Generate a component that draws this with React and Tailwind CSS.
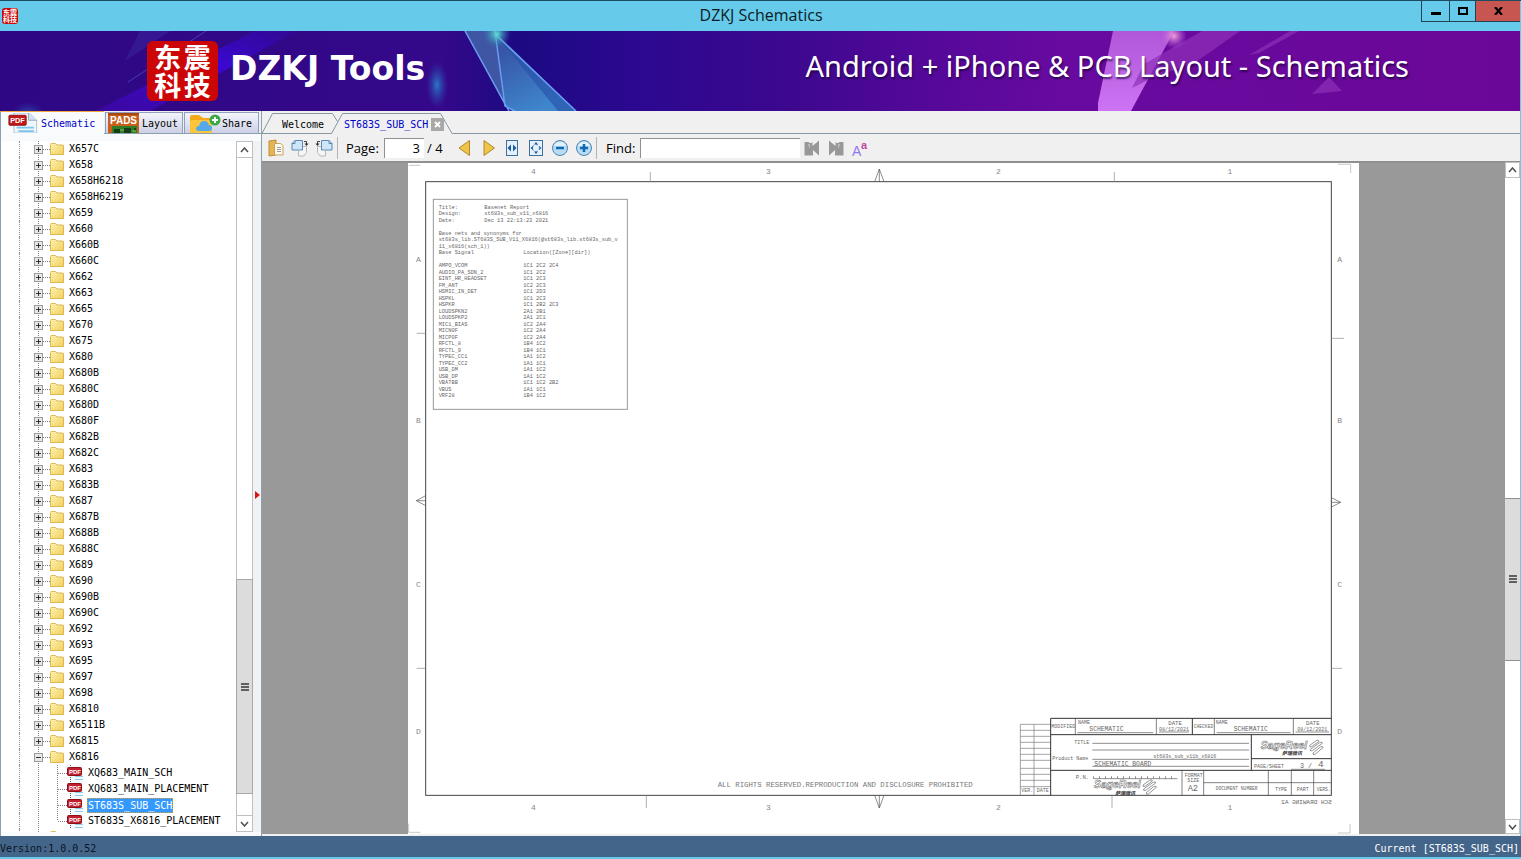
import React from "react";

const FOLDERS = [
  "X657C", "X658", "X658H6218", "X658H6219", "X659", "X660", "X660B", "X660C",
  "X662", "X663", "X665", "X670", "X675", "X680", "X680B", "X680C", "X680D",
  "X680F", "X682B", "X682C", "X683", "X683B", "X687", "X687B", "X688B", "X688C",
  "X689", "X690", "X690B", "X690C", "X692", "X693", "X695", "X697", "X698",
  "X6810", "X6511B", "X6815",
];

const FILES = ["XQ683_MAIN_SCH", "XQ683_MAIN_PLACEMENT", "ST683S_SUB_SCH", "ST683S_X6816_PLACEMENT"];

const SIGNALS = [
  ["AMPO_VCOM", "1C1 2C2 2C4"],
  ["AUDIO_PA_SDN_2", "1C1 2C2"],
  ["EINT_HR_HEADSET", "1C1 2C3"],
  ["FM_ANT", "1C2 2C3"],
  ["HSMIC_IN_DET", "1C1 2D3"],
  ["HSPKL", "1C1 2C3"],
  ["HSPKR", "1C1 2B2 2C3"],
  ["LOUDSPKN2", "2A1 2B1"],
  ["LOUDSPKP2", "2A1 2C1"],
  ["MIC1_BIAS", "1C2 2A4"],
  ["MICN0F", "1C2 2A4"],
  ["MICP0F", "1C2 2A4"],
  ["RFCTL_8", "1B4 1C2"],
  ["RFCTL_9", "1B4 1C1"],
  ["TYPEC_CC1", "1A1 1C2"],
  ["TYPEC_CC2", "1A1 1C1"],
  ["USB_DM", "1A1 1C2"],
  ["USB_DP", "1A1 1C2"],
  ["VBATBB", "1C1 1C2 2B2"],
  ["VBUS", "1A1 1C1"],
  ["VRF28", "1B4 1C2"],
];

/* ---------- title bar and banner ---------- */

function Seal({ className }) {
  return (
    <div className={"grid grid-cols-2 shrink-0 place-items-center bg-[#cc0606] text-white font-bold font-['Noto_Sans_CJK_SC',sans-serif] " + className}>
      <span>东</span>
      <span>震</span>
      <span>科</span>
      <span>技</span>
    </div>
  );
}

function TitleBar() {
  return (
    <header className="flex h-[31px] shrink-0 items-start border-t border-[#1d4a60] bg-[#66cbea]">
      <div className="flex flex-1 items-center self-stretch pl-[2px]">
        <Seal className="size-4 rounded-[3px] p-px text-[7px] leading-[7px]" />
      </div>
      <h1 className="pt-[2px] text-[16px] leading-[24px] text-[#0c1c24] font-['Open_Sans',sans-serif]">DZKJ Schematics</h1>
      <div className="flex flex-1 justify-end pr-px">
        <button aria-label="Minimize" className="flex h-[21px] w-[28px] items-center justify-center border-b border-l border-[#1d4450]">
          <svg width="10" height="10" viewBox="0 0 10 10"><path d="M0 6h10v3H0z" /></svg>
        </button>
        <button aria-label="Maximize" className="flex h-[21px] w-[27px] items-center justify-center border-x border-b border-[#1d4450]">
          <svg width="10" height="8" viewBox="0 0 10 8"><path d="M1 1h8v6H1z" fill="none" stroke="#000" strokeWidth="2" /></svg>
        </button>
        <button aria-label="Close" className="flex h-[21px] w-[44px] items-center justify-center border-b border-[#1d4450] bg-[#c75650]">
          <svg width="9" height="8" viewBox="0 0 9 8"><path d="M1 0l7 8M8 0L1 8" fill="none" stroke="#000" strokeWidth="2.2" /></svg>
        </button>
      </div>
    </header>
  );
}

function BannerArt() {
  return (
    <svg className="absolute inset-0 size-full" viewBox="0 0 1520 80" preserveAspectRatio="none" aria-hidden="true">
      <defs>
        <linearGradient id="sky" x1="0" x2="1" y1="0" y2="0">
          <stop offset="0" stopColor="#2e0884" />
          <stop offset="0.29" stopColor="#34088a" />
          <stop offset="0.34" stopColor="#1c0a82" />
          <stop offset="0.42" stopColor="#2c0890" />
          <stop offset="0.52" stopColor="#3c088e" />
          <stop offset="0.6" stopColor="#520898" />
          <stop offset="0.7" stopColor="#680aa0" />
          <stop offset="1" stopColor="#6b0798" />
        </linearGradient>
        <linearGradient id="beam" x1="0" x2="1" y1="1" y2="0">
          <stop offset="0" stopColor="#4a08c8" stopOpacity="0.5" />
          <stop offset="0.6" stopColor="#3c08e0" />
          <stop offset="1" stopColor="#3008a0" stopOpacity="0.6" />
        </linearGradient>
        <linearGradient id="glass" x1="0" x2="0.5" y1="0" y2="1">
          <stop offset="0" stopColor="#34489c" />
          <stop offset="1" stopColor="#3f86cc" />
        </linearGradient>
        <linearGradient id="pink" x1="0" x2="0" y1="0" y2="1">
          <stop offset="0" stopColor="#b056d8" />
          <stop offset="1" stopColor="#cc74f4" />
        </linearGradient>
        <radialGradient id="glow">
          <stop offset="0" stopColor="#2a78c8" />
          <stop offset="1" stopColor="#2a40a8" stopOpacity="0" />
        </radialGradient>
        <radialGradient id="teal">
          <stop offset="0" stopColor="#60e0d8" />
          <stop offset="1" stopColor="#3080b0" stopOpacity="0" />
        </radialGradient>
        <radialGradient id="flare">
          <stop offset="0" stopColor="#f0a0d8" />
          <stop offset="1" stopColor="#c060e0" stopOpacity="0" />
        </radialGradient>
      </defs>
      <rect width="1520" height="80" fill="url(#sky)" />
      <path d="M255 0h42L150 80H95z" fill="url(#beam)" opacity="0.85" />
      <path d="M206 0L128 51" stroke="#5560d0" strokeWidth="1" opacity="0.6" />
      <path d="M140 0h30L125 30z" fill="#4030a8" opacity="0.4" />
      <ellipse cx="437" cy="54" rx="11" ry="24" fill="url(#glow)" />
      <ellipse cx="28" cy="84" rx="18" ry="13" fill="url(#glow)" opacity="0.7" />
      <path d="M465 0h31l9 75z" fill="#3f56a4" />
      <path d="M496 2l9 73 7 5h64z" fill="url(#glass)" />
      <path d="M496 4l80 76h-18z" fill="#2450a8" opacity="0.6" />
      <path d="M465 0l44 80M495 0l10 75 10 5M496 4l80 76" fill="none" stroke="#6a9cf0" strokeWidth="1.5" />
      <circle cx="497" cy="3" r="14" fill="url(#teal)" />
      <path d="M1113 0h61l-43 80h-33v-8z" fill="url(#pink)" />
      <path d="M1202 0h38l-44 31-44 16-20 10 12-24z" fill="#9030b8" opacity="0.7" />
      <path d="M1290 0h9l-40 22-10 2zM1329 46l13 14-30 3z" fill="#8a2cb4" opacity="0.8" />
      <circle cx="1174" cy="5" r="13" fill="url(#flare)" />
    </svg>
  );
}

function Banner() {
  return (
    <div className="relative mr-px flex h-20 shrink-0 items-center overflow-hidden bg-[#30087f]">
      <BannerArt />
      <div className="relative flex w-full items-center pl-[147px] pr-[111px] text-white">
        <Seal className="h-[60px] w-[71px] rounded-[6px] px-[6px] py-[2px] text-[27px] leading-[28px]" />
        <span className="ml-[12px] flex-1 pb-1 text-[33px] leading-[40px] font-bold font-['DejaVu_Sans',sans-serif]">DZKJ Tools</span>
        <span className="pb-[10px] text-[29px] leading-[40px] whitespace-nowrap font-['Noto_Sans',sans-serif] [text-shadow:1px_2px_2px_rgba(20,0,50,0.7)]">
          Android + iPhone &amp; PCB Layout - Schematics
        </span>
      </div>
    </div>
  );
}

/* ---------- icons ---------- */

function PdfIcon({ className }) {
  return (
    <svg className={className} viewBox="0 0 32 22" aria-hidden="true">
      <path d="M6 0h17l8 8v14H6z" fill="#eef6fc" stroke="#a8c0d4" />
      <path d="M22 0v8h9" fill="#cfe0ee" stroke="#90a8bc" />
      <path d="M9 16h19M11 20h17" stroke="#7cc4ec" strokeWidth="2" />
      <rect x="0.5" y="2.5" width="19" height="11" rx="1" fill="#c41818" stroke="#8c1010" />
      <text x="2" y="11" fontSize="8" fontWeight="700" fill="#fff" fontFamily="Liberation Sans, sans-serif">PDF</text>
    </svg>
  );
}

function FilePdfIcon() {
  return (
    <svg width="16" height="16" viewBox="0 0 16 16" className="shrink-0" aria-hidden="true">
      <path d="M3.500 0v16h12V0z" fill="#f2f8fc" />
      <path d="M3.500 0v16" stroke="#506070" strokeDasharray="1 1" />
      <path d="M8 11.500h8M8 14.500h8" stroke="#8cd0f0" />
      <rect x="0.500" y="2.500" width="14" height="8" rx="1" fill="#c0202c" stroke="#8e1018" />
      <text x="2" y="9" fontSize="6" fontWeight="700" fill="#fff" fontFamily="Liberation Sans, sans-serif">PDF</text>
    </svg>
  );
}

function PadsIcon() {
  return (
    <svg width="31" height="20" viewBox="0 0 31 20" aria-hidden="true">
      <rect width="31" height="20" fill="#c8601c" />
      <path d="M0 0h31v2H0z" fill="#a84810" />
      <path d="M4 13h25v7H4z" fill="#2f7c28" />
      <path d="M6 16h6v4H6zM16 15h7v5h-7zM26 15h2v2h-2z" fill="#173c18" />
      <path d="M12 17h4M24 18h4" stroke="#7cc850" />
      <text x="2" y="11" fontSize="10" fontWeight="700" fill="#fff" fontFamily="Liberation Sans, sans-serif">PADS</text>
    </svg>
  );
}

function ShareIcon() {
  return (
    <svg width="32" height="20" viewBox="0 0 32 20" aria-hidden="true">
      <path d="M1 4q0-2 2-2h7l4 3h8v15H1z" fill="#f6a81c" />
      <path d="M1 9q0-2 3-2h16q3 0 3 3v10H1z" fill="#fcc63c" />
      <path d="M10 18q-3 0-3-2.500t3-2.500q1-5 5-5 4 0 5 4 3 0 3 3t-3 3z" fill="#54a8ec" />
      <circle cx="26" cy="7" r="5.500" fill="#3ca848" />
      <path d="M26 4v6M23 7h6" stroke="#fff" strokeWidth="1.800" />
    </svg>
  );
}

function FolderIcon() {
  return (
    <svg width="14" height="12" viewBox="0 0 14 12" className="shrink-0" aria-hidden="true">
      <defs>
        <linearGradient id="fold" x1="0" y1="0" x2="1" y2="1">
          <stop offset="0" stopColor="#fdf2b0" />
          <stop offset="1" stopColor="#f2cf5c" />
        </linearGradient>
      </defs>
      <path d="M0.500 11.500V1.500q0-1 1-1h4l1.500 1.500h5.500q1 0 1 1v8.500z" fill="url(#fold)" stroke="#dcb850" />
    </svg>
  );
}

function Expander({ open }) {
  return (
    <svg width="30" height="16" viewBox="0 0 30 16" aria-hidden="true">
      <path d="M18.500 0v16M23 8.500h7" stroke="#808080" strokeDasharray="1 1" />
      <rect x="14.500" y="4.500" width="8" height="8" fill="#e8e8e8" stroke="#9c9c9c" />
      <path d={open ? "M16 8.500h5" : "M16 8.500h5M18.500 6v5"} stroke="#333" />
    </svg>
  );
}

/* ---------- left panel ---------- */

function FolderRow({ name, open }) {
  return (
    <li className="flex h-4 items-center">
      <span className="h-4 w-[19px] shrink-0 border-r border-dotted border-[#909090]" />
      <button aria-label={name ? "Toggle " + name : "Toggle folder"} className="h-4 w-[30px] shrink-0">
        <Expander open={open} />
      </button>
      <FolderIcon />
      {name && <span className="pl-[5px]">{name}</span>}
    </li>
  );
}

function FileRow({ name, selected, last }) {
  return (
    <li className="flex h-4 items-center">
      <span className="h-4 w-[19px] shrink-0 border-r border-dotted border-[#909090]" />
      <svg width="47" height="16" viewBox="0 0 47 16" className="shrink-0" aria-hidden="true">
        <path d={last ? "M18.500 0v16M37.500 0v8M38 8.500h9" : "M18.500 0v16M37.500 0v16M38 8.500h9"} fill="none" stroke="#808080" strokeDasharray="1 1" />
      </svg>
      <FilePdfIcon />
      <span className={selected ? "ml-1 h-[15px] border border-dotted border-[#e0a030] bg-[#3399ff] leading-[13px] text-white" : "ml-1 pl-px"}>{name}</span>
    </li>
  );
}

function ArrowButton({ up, className }) {
  return (
    <button aria-label={up ? "Scroll up" : "Scroll down"} className={"flex shrink-0 items-center justify-center border border-[#c0c0c0] bg-white " + className}>
      <svg width="9" height="6" viewBox="0 0 9 6" aria-hidden="true">
        <path d={up ? "M1 5l3.500-4L8 5" : "M1 1l3.500 4L8 1"} fill="none" stroke="#505050" strokeWidth="1.500" />
      </svg>
    </button>
  );
}

function Grip() {
  return (
    <svg width="8" height="8" viewBox="0 0 8 8" aria-hidden="true">
      <path d="M0 1h8M0 4h8M0 7h8" stroke="#606060" strokeWidth="2" />
    </svg>
  );
}

function LeftPanel() {
  return (
    <aside className="flex w-[261px] shrink-0 flex-col bg-[#f0f0f0]">
      <div className="flex h-[23px] shrink-0 items-end border-b border-[#8ba0b0]">
        <button className="-mb-px flex h-6 w-[104px] items-center overflow-hidden border-t-2 border-l border-t-[#f5a83a] border-l-[#8ba0b0] bg-[#fafbfd] pl-[6px] text-[#0000c8]">
          <PdfIcon className="mr-[2px] h-[20px] w-[32px] shrink-0" />
          <span className="pt-[2px]">Schematic</span>
        </button>
        <button className="ml-px flex h-[21px] w-[78px] items-center border border-b-0 border-[#8f9fbc] bg-linear-to-b from-[#f4f5fb] to-[#cdd0e6] pl-[2px]">
          <PadsIcon />
          <span className="pt-[2px] pl-[3px]">Layout</span>
        </button>
        <button className="ml-px flex h-[21px] w-[75px] items-center border border-b-0 border-[#8f9fbc] bg-linear-to-b from-[#f4f5fb] to-[#cdd0e6] pl-[4px]">
          <ShareIcon />
          <span className="pt-[2px] pl-px">Share</span>
        </button>
      </div>
      <div className="flex min-h-0 flex-1 border-l border-[#8ba0b0] bg-[#f9fafc] pt-[7px] pb-1">
        <ul className="min-w-0 flex-1 overflow-hidden bg-white whitespace-nowrap">
          {FOLDERS.map((name) => (
            <FolderRow key={name} name={name} />
          ))}
          <FolderRow name="X6816" open />
          {FILES.map((name, i) => (
            <FileRow key={name} name={name} selected={i === 2} last={i === 3} />
          ))}
          <FolderRow />
        </ul>
        <div className="flex w-[17px] shrink-0 flex-col">
          <ArrowButton up className="h-[17px]" />
          <div className="grow-[423] basis-0 border-x border-[#c0c0c0] bg-white" />
          <div className="flex grow-[214] basis-0 items-center justify-center border border-[#a8a8a8] bg-[#dcdcdc]"><Grip /></div>
          <div className="grow-[21] basis-0 border-x border-[#c0c0c0] bg-white" />
          <ArrowButton className="h-[17px]" />
        </div>
        <div className="flex w-2 shrink-0 items-center justify-center bg-[#f0f2f3]">
          <svg width="5" height="8" viewBox="0 0 5 8" className="mt-4" aria-hidden="true"><path d="M0 0l5 4-5 4z" fill="#d81818" /></svg>
        </div>
      </div>
    </aside>
  );
}

/* ---------- document area ---------- */

function DocTabs() {
  return (
    <div className="relative flex h-[23px] shrink-0 items-center">
      <svg className="absolute top-0 left-0" width="192" height="24" viewBox="0 0 192 24" aria-hidden="true">
        <path d="M0 22.500L10.500 2.500h60l5 8" fill="none" stroke="#8698a4" />
        <path d="M0 22.500h70" stroke="#8698a4" />
        <path d="M69 24L80.500 2.500h98l11.500 20V24z" fill="#f0f0f0" />
        <path d="M69.500 22.500L80.500 2.500h98l11.500 20" fill="none" stroke="#8698a4" />
      </svg>
      <button className="relative h-5 w-[70px] pl-3 pt-1">Welcome</button>
      <button className="relative h-5 pt-1 pl-3 text-[#0000c8]">ST683S_SUB_SCH</button>
      <button aria-label="Close tab" className="relative mt-1 ml-[3px] flex size-[13px] items-center justify-center bg-[#a8a8a8]">
        <svg width="7" height="7" viewBox="0 0 7 7" aria-hidden="true"><path d="M1 1l5 5M6 1L1 6" stroke="#fff" strokeWidth="1.800" /></svg>
      </button>
      <div className="ml-[7px] h-full flex-1 border-b border-[#8698a4]" />
    </div>
  );
}

function Tool({ label, children }) {
  return (
    <button aria-label={label} className="flex h-6 w-6 shrink-0 items-center justify-center">
      <svg width="18" height="18" viewBox="0 0 18 18" aria-hidden="true">{children}</svg>
    </button>
  );
}

function ZoomDisc({ d }) {
  return (
    <>
      <circle cx="9" cy="9" r="7.500" fill="#b4dcf6" stroke="#5484a8" />
      <path d="M3 7a6.500 6.500 0 0 1 12 0z" fill="#e0f2fc" />
      <path d={d} stroke="#1468ac" strokeWidth="2.500" />
    </>
  );
}

function Binoculars() {
  return (
    <>
      <path d="M1.500 3h4l1 1h2l1-1v4L16 1.500v15L10 11v5.500H1.500z" fill="#989898" />
      <path d="M5 6h2M6 8h1" stroke="#dcdcdc" />
    </>
  );
}

function PageTurn() {
  return (
    <>
      <path d="M9.500 7.500h6v6l-2.500 3.500H7.500v-5" fill="#f6f6f6" stroke="#b4b8bc" />
      <path d="M4 1.500h7.500v9.500h-10.500v-6.500z" fill="#cfe5fa" stroke="#5c88b0" />
      <path d="M4 1.500v3H1" fill="none" stroke="#5c88b0" />
      <path d="M13 2.500h2.500V5" fill="none" stroke="#404040" />
      <path d="M13.500 4.500h4l-2 2.500z" fill="#303030" />
    </>
  );
}

function Toolbar() {
  return (
    <div className="flex h-7 shrink-0 items-center border-b border-[#909090] bg-[#f0f0f0] pl-[2px] text-[13px] font-['Open_Sans',sans-serif] text-black">
      <Tool label="Open">
        <path d="M2 2l7-1v15l-7 1z" fill="#e8b450" stroke="#c08c38" />
        <path d="M7.500 4.500h6l2.500 2v9.500H7.500z" fill="#fdf8ea" stroke="#c4a468" />
        <path d="M10 8.500h4M10 10.500h4M10 12.500h4" stroke="#9aa0a8" />
      </Tool>
      <Tool label="Rotate right"><PageTurn /></Tool>
      <Tool label="Rotate left">
        <g transform="matrix(-1 0 0 1 18 0)"><PageTurn /></g>
      </Tool>
      <span className="mx-px h-[22px] w-px bg-[#b4b4b4]" />
      <label htmlFor="page-number" className="w-[45px] pl-[7px]">Page:</label>
      <input id="page-number" defaultValue="3" className="h-5 w-10 border-t border-l border-[#909090] bg-white pr-1 text-right outline-none" />
      <span className="w-7 pl-[3px] whitespace-nowrap">/ 4</span>
      <Tool label="Previous page"><path d="M14.500 1.500v15L4 9z" fill="#f0c448" stroke="#b08a28" /></Tool>
      <Tool label="Next page"><path d="M5 1.500v15L15.500 9z" fill="#f0c448" stroke="#b08a28" /></Tool>
      <Tool label="Fit width">
        <rect x="3.500" y="1.500" width="11" height="15" fill="#e4f0fa" stroke="#4070a0" />
        <path d="M8 5.500v7L4.500 9zM10 5.500v7L13.500 9z" fill="#1c5c9c" />
      </Tool>
      <Tool label="Fit page">
        <rect x="2.500" y="1.500" width="13" height="15" fill="#e4f0fa" stroke="#4070a0" />
        <path d="M9 3l2 2.500H7zM9 15l2-2.500H7zM3.500 9L6 7v4zM14.500 9L12 7v4z" fill="#1c5c9c" />
        <circle cx="9" cy="9" r="3.500" fill="none" stroke="#4c80b4" strokeDasharray="2 2" />
      </Tool>
      <Tool label="Zoom out"><ZoomDisc d="M5 9h8" /></Tool>
      <Tool label="Zoom in"><ZoomDisc d="M5 9h8M9 5v8" /></Tool>
      <span className="h-[22px] w-px bg-[#b4b4b4]" />
      <label htmlFor="find" className="w-[43px] pl-[9px]">Find:</label>
      <input id="find" className="h-5 w-[160px] border-t border-l border-[#909090] bg-white px-1 outline-none" />
      <Tool label="Find previous"><Binoculars /></Tool>
      <Tool label="Find next">
        <g transform="matrix(-1 0 0 1 18 0)"><Binoculars /></g>
      </Tool>
      <Tool label="Match case">
        <text x="1" y="17" fontSize="14" fill="#9078f0" fontFamily="Liberation Sans, sans-serif">A</text>
        <text x="10" y="10" fontSize="11" fontWeight="700" fill="#c048a0" fontFamily="Liberation Sans, sans-serif">a</text>
      </Tool>
    </div>
  );
}

function SageLogo({ x, y }) {
  return (
    <g transform={"translate(" + x + " " + y + ")"}>
      <text x="0" y="22" fontSize="31" fontStyle="italic" fontWeight="700" fontFamily="Liberation Sans, sans-serif" fill="#fff" stroke="#606060" strokeWidth="1.500">SageReel</text>
      <text x="64" y="42" fontSize="15" fontStyle="italic" fontWeight="700" fontFamily="Noto Sans CJK SC, sans-serif" fill="#303030">萨瑞微讯</text>
      <g fill="none" stroke="#606060" strokeWidth="2">
        <path d="M147 12l20-14q8-4 8 2l-22 16q-8 3-6-4z" />
        <path d="M149 24l28-20q9-4 8 2l-30 22q-8 3-6-4z" />
        <path d="M157 35l22-18q9-4 8 2l-24 20q-8 3-6-4z" />
      </g>
    </g>
  );
}

function TitleBlock() {
  const rows = [61, 79, 97, 115, 133, 151, 175, 193, 211, 230];
  return (
    <g transform="translate(1806 1641)">
      <path d={"M31 43h91M31 43v213M72 43v213" + rows.map((y) => "M31 " + y + "h91").join("")} fill="none" stroke="#777" strokeWidth="2" />
      <path d="M122 25h842M122 25v231M122 74h842M122 181h842M724 74v107M724 146h240M547 25v49" fill="none" stroke="#333" strokeWidth="3" />
      <path d="M196 25v49M439 25v49M613 25v49M850 25v49M516 181v75M581 181v75M775 181v75M844 181v75M911 181v75M581 218h383" fill="none" stroke="#444" strokeWidth="2" />
      <path d="M202 68h228M447 66h90M620 68h222M857 66h100M247 100h470M247 120h470M247 148h470M247 169h470M843 178h102" fill="none" stroke="#555" strokeWidth="2" />
      <path d="M250 206h252" stroke="#555" strokeWidth="2" />
      <path d="M250 202h252" stroke="#555" strokeWidth="7" strokeDasharray="2 16" />
      <g fill="#666" fontSize="15">
        <text x="34" y="246">VER.</text>
        <text x="80" y="246">DATE</text>
        <text x="124" y="54">MODIFIED</text>
        <text x="204" y="42">NAME</text>
        <text x="551" y="54" fontSize="14">CHECKED</text>
        <text x="617" y="43">NAME</text>
        <text x="193" y="101">TITLE</text>
        <text x="127" y="149">Product Name</text>
        <text x="732" y="175">PAGE/SHEET</text>
        <text x="524" y="202">FORMAT</text>
        <text x="532" y="216">SIZE</text>
        <text x="795" y="243">TYPE</text>
        <text x="860" y="243">PART</text>
        <text x="920" y="243" fontSize="14">VERS.</text>
        <text x="617" y="240" fontSize="14">DOCUMENT NUMBER</text>
      </g>
      <g fill="#666" fontSize="17">
        <text x="475" y="46">DATE</text>
        <text x="888" y="46">DATE</text>
        <text x="447" y="64" fontSize="15">08/12/2021</text>
        <text x="862" y="64" fontSize="15">08/12/2021</text>
        <text x="197" y="207">P.N.</text>
        <text x="430" y="144" fontSize="15">st683s_sub_v11b_x6816</text>
        <text x="238" y="63" fontSize="19">SCHEMATIC</text>
        <text x="671" y="63" fontSize="19">SCHEMATIC</text>
        <text x="253" y="168" fontSize="19">SCHEMATIC BOARD</text>
        <text x="533" y="242" fontSize="26">A2</text>
        <text x="870" y="173" fontSize="20">3 /</text>
        <text x="924" y="171" fontSize="28">4</text>
      </g>
      <text x="0" y="0" fontSize="18" fill="#666" transform="matrix(-1 0 0 1 965 281)">SCH DRAWING A2</text>
      <SageLogo x={752} y={94} />
      <SageLogo x={252} y={213} />
    </g>
  );
}

function Sheet() {
  const columns = [["4", 376], ["3", 1081], ["2", 1771], ["1", 2466]];
  const zones = [["A", 290], ["B", 773], ["C", 1265], ["D", 1706]];
  const header = [
    [0, "Title:", "Basenet Report", 229],
    [1, "Design:", "st683s_sub_v11_x6816", 229],
    [2, "Date:", "Dec 13 22:13:23 2021", 229],
    [4, "Base nets and synonyms for"],
    [5, "st683s_lib.ST683S_SUB_V11_X6816(@st683s_lib.st683s_sub_v"],
    [6, "11_x6816(sch_1))"],
    [7, "Base Signal", "Location([Zone][dir])", 346],
  ];
  return (
    <svg width="951" height="671" viewBox="0 0 2853 2013" className="shrink-0 bg-white" fontFamily="Liberation Mono, monospace" role="img" aria-label="ST683S_SUB_SCH sheet 3">
      <rect x="53" y="56" width="2717" height="1841" fill="none" stroke="#444" strokeWidth="3" />
      <rect x="76" y="109" width="582" height="630" fill="none" stroke="#999" strokeWidth="3" />
      <g fill="none" stroke="#888" strokeWidth="2">
        <path d="M727 27v29M2119 27v29M715 1897v38M2112 1897v38M26 511h27M26 1516h27M2770 526h38M2770 1516h32" />
        <path d="M1400 56l14-38 14 38M1414 18v38M1400 1897l14 38 14-38M1414 1935v-38" stroke="#555" />
        <path d="M53 998l-28 15 28 15M25 1013h28M2770 1004l28 14-28 14M2798 1018h-28" stroke="#555" />
        <path d="M2 7h35M2790 4h38v26M2790 2010h36v-27M2 2008h35M2 2008v-26" stroke="#aaa" />
      </g>
      <g fill="#888" fontSize="24" textAnchor="middle">
        {columns.map(([n, x]) => (
          <React.Fragment key={n}>
            <text x={x} y="34">{n}</text>
            <text x={x} y="1941">{n}</text>
          </React.Fragment>
        ))}
        {zones.map(([n, y]) => (
          <React.Fragment key={n}>
            <text x="31" y={y + 8}>{n}</text>
            <text x="2795" y={y + 8}>{n}</text>
          </React.Fragment>
        ))}
      </g>
      <g fill="#666" fontSize="16">
        {header.map(([row, a, b, x]) => (
          <React.Fragment key={row}>
            <text x="92" y={137 + row * 19.5}>{a}</text>
            {b && <text x={x} y={137 + row * 19.5}>{b}</text>}
          </React.Fragment>
        ))}
        {SIGNALS.map(([a, b], i) => (
          <React.Fragment key={a}>
            <text x="92" y={137 + (i + 9) * 19.5}>{a}</text>
            <text x="346" y={137 + (i + 9) * 19.5}>{b}</text>
          </React.Fragment>
        ))}
      </g>
      <text x="929" y="1872" fontSize="22" fill="#777">ALL RIGHTS RESERVED.REPRODUCTION AND DISCLOSURE PROHIBITED</text>
      <TitleBlock />
    </svg>
  );
}

function Viewer() {
  return (
    <div className="flex min-h-0 flex-1">
      <div className="flex min-w-0 flex-1 items-start justify-center overflow-hidden border-t border-[#909090] bg-[#999999]">
        <Sheet />
      </div>
      <div className="flex w-[15px] shrink-0 flex-col bg-white">
        <ArrowButton up className="h-4" />
        <div className="grow-[321] basis-0" />
        <div className="flex grow-[161] basis-0 items-center justify-center border-y border-[#909090] bg-[#dcdcdc]"><Grip /></div>
        <div className="grow-[159] basis-0" />
        <ArrowButton className="h-[15px]" />
      </div>
    </div>
  );
}

export default function App() {
  return (
    <div className="flex h-screen min-h-0 flex-col overflow-hidden bg-[#66cbea] text-[10px] leading-4 text-black font-['DejaVu_Sans_Mono',monospace]">
      <TitleBar />
      <Banner />
      <main className="mr-px flex min-h-0 flex-1 bg-[#f0f0f0]">
        <LeftPanel />
        <section className="flex min-w-0 flex-1 flex-col border-l border-[#8ba0b0] bg-[#f0f0f0] pb-[2px]">
          <DocTabs />
          <Toolbar />
          <Viewer />
        </section>
      </main>
      <footer className="mb-[2px] flex h-[21px] shrink-0 items-end justify-between bg-[#44658a] pr-[2px]">
        <span className="text-[#0a1420]">Version:1.0.0.52</span>
        <span className="text-white">Current [ST683S_SUB_SCH]</span>
      </footer>
    </div>
  );
}
